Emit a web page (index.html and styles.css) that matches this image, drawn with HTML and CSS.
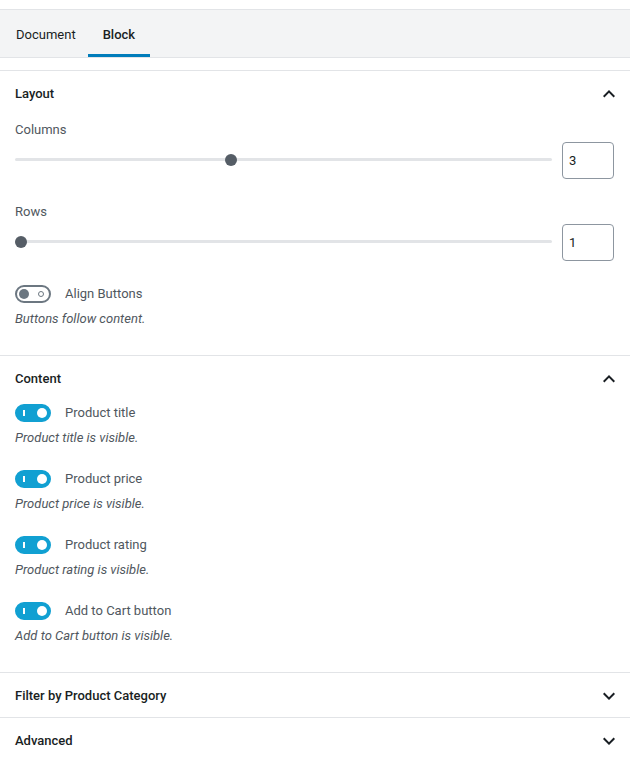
FILE: index.html
```html
<!DOCTYPE html>
<html>
<head>
<meta charset="utf-8">
<link rel="stylesheet" href="styles.css">
</head>
<body>
<div class="sidebar">
  <div class="tabs">
    <button class="tab">Document</button>
    <button class="tab is-active">Block</button>
  </div>

  <div class="panel">
    <div class="panel-head">
      <span class="panel-title">Layout</span>
      <svg class="chev" viewBox="0 0 24 24" width="24" height="24"><path d="M12 8l-6 6 1.41 1.41L12 10.83l4.59 4.58L18 14z"/></svg>
    </div>
    <div class="panel-body">
      <div class="field">
        <label class="field-label">Columns</label>
        <div class="range-row">
          <input class="range" type="range" min="1" max="6" value="3">
          <input class="num" type="number" value="3">
        </div>
      </div>
      <div class="field">
        <label class="field-label">Rows</label>
        <div class="range-row">
          <input class="range" type="range" min="1" max="6" value="1">
          <input class="num" type="number" value="1">
        </div>
      </div>
      <div class="toggle-field">
        <div class="toggle-row">
          <span class="toggle"><span class="knob"></span><span class="ring"></span></span>
          <span class="toggle-label">Align Buttons</span>
        </div>
        <p class="help">Buttons follow content.</p>
      </div>
    </div>
  </div>

  <div class="panel">
    <div class="panel-head">
      <span class="panel-title">Content</span>
      <svg class="chev" viewBox="0 0 24 24" width="24" height="24"><path d="M12 8l-6 6 1.41 1.41L12 10.83l4.59 4.58L18 14z"/></svg>
    </div>
    <div class="panel-body content-body">
      <div class="toggle-field">
        <div class="toggle-row">
          <span class="toggle is-on"><span class="bar"></span><span class="knob"></span></span>
          <span class="toggle-label">Product title</span>
        </div>
        <p class="help">Product title is visible.</p>
      </div>
      <div class="toggle-field">
        <div class="toggle-row">
          <span class="toggle is-on"><span class="bar"></span><span class="knob"></span></span>
          <span class="toggle-label">Product price</span>
        </div>
        <p class="help">Product price is visible.</p>
      </div>
      <div class="toggle-field">
        <div class="toggle-row">
          <span class="toggle is-on"><span class="bar"></span><span class="knob"></span></span>
          <span class="toggle-label">Product rating</span>
        </div>
        <p class="help">Product rating is visible.</p>
      </div>
      <div class="toggle-field">
        <div class="toggle-row">
          <span class="toggle is-on"><span class="bar"></span><span class="knob"></span></span>
          <span class="toggle-label">Add to Cart button</span>
        </div>
        <p class="help">Add to Cart button is visible.</p>
      </div>
    </div>
  </div>

  <div class="panel">
    <div class="panel-head">
      <span class="panel-title">Filter by Product Category</span>
      <svg class="chev" viewBox="0 0 24 24" width="24" height="24"><path d="M7.41 8.59L12 13.17l4.59-4.58L18 10l-6 6-6-6 1.41-1.41z"/></svg>
    </div>
  </div>

  <div class="panel">
    <div class="panel-head">
      <span class="panel-title">Advanced</span>
      <svg class="chev" viewBox="0 0 24 24" width="24" height="24"><path d="M7.41 8.59L12 13.17l4.59-4.58L18 10l-6 6-6-6 1.41-1.41z"/></svg>
    </div>
  </div>
</div>
</body>
</html>
```
FILE: styles.css
```css
* { box-sizing: border-box; }
html, body { margin: 0; padding: 0; background: #fff; }
body {
  font-family: Roboto, "Liberation Sans", sans-serif;
  font-size: 13px;
  color: #191e23;
}
.sidebar { padding-top: 9px; }

.tabs {
  display: flex;
  height: 49px;
  background: #f3f4f5;
  border-top: 1px solid #e2e4e7;
  border-bottom: 1px solid #e2e4e7;
  padding-left: 1px;
}
.tab {
  font: inherit;
  color: #191e23;
  background: none;
  border: 0;
  padding: 1px 15px 0;
  height: 47px;
  margin: 0;
}
.tab:first-child { padding-right: 12px; }
.tab.is-active {
  font-weight: 500;
  box-shadow: inset 0 -3px 0 #007cba;
}

.panel {
  border-top: 1px solid #e2e4e7;
}
.tabs + .panel { margin-top: 12px; }

.panel-head {
  height: 44px;
  display: flex;
  align-items: center;
  justify-content: space-between;
  padding: 1px 9px 0 15px;
}
.panel-title { font-weight: 500; color: #191e23; }
.chev { fill: #191e23; display: block; }

.panel-body { padding: 5px 16px 27px 15px; }
.content-body { padding-top: 4px; }

.field { margin-bottom: 23px; }
.field + .field { margin-bottom: 24px; }
.field-label {
  display: block;
  line-height: 18px;
  padding-top: 1px;
  color: #50575e;
  margin-bottom: 3px;
}
.range-row {
  display: flex;
  align-items: center;
  gap: 10px;
}
.range {
  -webkit-appearance: none;
  appearance: none;
  flex: 1;
  margin: 0;
  height: 18px;
  background: transparent;
  position: relative;
  top: -1px;
}
.range::-webkit-slider-runnable-track {
  height: 3px;
  background: #e2e4e7;
  border-radius: 2px;
}
.range::-webkit-slider-thumb {
  -webkit-appearance: none;
  width: 12px;
  height: 12px;
  border-radius: 50%;
  background: #555d66;
  margin-top: -4.5px;
  border: 0;
}
.num {
  width: 52px;
  height: 37px;
  border: 1px solid #8d96a0;
  border-radius: 4px;
  padding: 0 6px;
  font: inherit;
  color: #191e23;
  -moz-appearance: textfield;
}
.num::-webkit-inner-spin-button,
.num::-webkit-outer-spin-button { -webkit-appearance: none; margin: 0; }

.toggle-field + .toggle-field { margin-top: 23px; }
.toggle-row {
  display: flex;
  align-items: center;
  gap: 14px;
  height: 18px;
}
.toggle {
  position: relative;
  width: 36px;
  height: 18px;
  border-radius: 9px;
  border: 2px solid #6c7781;
  background: #fff;
  flex: none;
}
.toggle .knob {
  position: absolute;
  left: 2px;
  top: 2px;
  width: 10px;
  height: 10px;
  border-radius: 50%;
  background: #6c7781;
}
.toggle .ring {
  position: absolute;
  right: 5px;
  top: 4px;
  width: 6px;
  height: 6px;
  border-radius: 50%;
  border: 1px solid #6c7781;
}
.toggle.is-on {
  background: #11a0d2;
  border-color: #11a0d2;
}
.toggle.is-on .knob {
  left: auto;
  right: 2px;
  background: #fff;
}
.toggle .bar {
  position: absolute;
  left: 6px;
  top: 4px;
  width: 2px;
  height: 6px;
  background: #fff;
}
.toggle-label { color: #50575e; line-height: 18px; }
.help {
  margin: 7px 0 0;
  font-style: italic;
  line-height: 18px;
  color: #50575e;
}
```
